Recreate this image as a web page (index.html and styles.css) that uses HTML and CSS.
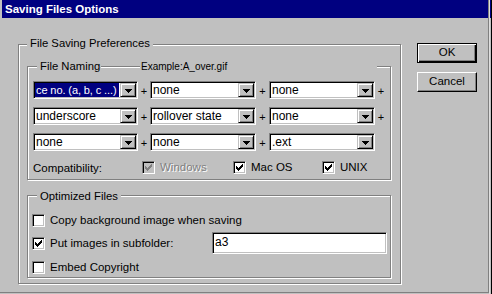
FILE: index.html
```html
<!DOCTYPE html>
<html>
<head>
<meta charset="utf-8">
<link rel="stylesheet" href="styles.css">
</head>
<body>
<div class="screen">
  <div class="dialog">
    <div class="titlebar">Saving Files Options</div>
    <div class="content">
      <div class="group group-outer">
        <div class="group-label outer-label">File Saving Preferences</div>

        <div class="group group-naming">
          <div class="naming-head">
            <span class="group-label naming-label">File Naming</span>
            <span class="example">Example:A_over.gif</span>
          </div>

          <div class="combo-row">
            <div class="combo w105"><span class="combo-text selected">ce no. (a, b, c ...)</span><span class="combo-btn"><svg width="7" height="4" viewBox="0 0 7 4"><path d="M0 0h7v1H0zM1 1h5v1H1zM2 2h3v1H2zM3 3h1v1H3z" fill="#000"/></svg></span></div>
            <span class="plus p12">+</span>
            <div class="combo w106"><span class="combo-text">none</span><span class="combo-btn"><svg width="7" height="4" viewBox="0 0 7 4"><path d="M0 0h7v1H0zM1 1h5v1H1zM2 2h3v1H2zM3 3h1v1H3z" fill="#000"/></svg></span></div>
            <span class="plus p13">+</span>
            <div class="combo w106"><span class="combo-text">none</span><span class="combo-btn"><svg width="7" height="4" viewBox="0 0 7 4"><path d="M0 0h7v1H0zM1 1h5v1H1zM2 2h3v1H2zM3 3h1v1H3z" fill="#000"/></svg></span></div>
            <span class="plus p12">+</span>
          </div>

          <div class="combo-row">
            <div class="combo w105"><span class="combo-text">underscore</span><span class="combo-btn"><svg width="7" height="4" viewBox="0 0 7 4"><path d="M0 0h7v1H0zM1 1h5v1H1zM2 2h3v1H2zM3 3h1v1H3z" fill="#000"/></svg></span></div>
            <span class="plus p12">+</span>
            <div class="combo w106"><span class="combo-text">rollover state</span><span class="combo-btn"><svg width="7" height="4" viewBox="0 0 7 4"><path d="M0 0h7v1H0zM1 1h5v1H1zM2 2h3v1H2zM3 3h1v1H3z" fill="#000"/></svg></span></div>
            <span class="plus p13">+</span>
            <div class="combo w106"><span class="combo-text">none</span><span class="combo-btn"><svg width="7" height="4" viewBox="0 0 7 4"><path d="M0 0h7v1H0zM1 1h5v1H1zM2 2h3v1H2zM3 3h1v1H3z" fill="#000"/></svg></span></div>
            <span class="plus p12">+</span>
          </div>

          <div class="combo-row">
            <div class="combo w105"><span class="combo-text">none</span><span class="combo-btn"><svg width="7" height="4" viewBox="0 0 7 4"><path d="M0 0h7v1H0zM1 1h5v1H1zM2 2h3v1H2zM3 3h1v1H3z" fill="#000"/></svg></span></div>
            <span class="plus p12">+</span>
            <div class="combo w106"><span class="combo-text">none</span><span class="combo-btn"><svg width="7" height="4" viewBox="0 0 7 4"><path d="M0 0h7v1H0zM1 1h5v1H1zM2 2h3v1H2zM3 3h1v1H3z" fill="#000"/></svg></span></div>
            <span class="plus p13">+</span>
            <div class="combo w106"><span class="combo-text">.ext</span><span class="combo-btn"><svg width="7" height="4" viewBox="0 0 7 4"><path d="M0 0h7v1H0zM1 1h5v1H1zM2 2h3v1H2zM3 3h1v1H3z" fill="#000"/></svg></span></div>
          </div>

          <div class="compat-row">
            <span class="compat-label">Compatibility:</span>
            <span class="check-item item-win disabled">
              <span class="checkbox"><svg width="13" height="13" viewBox="0 0 13 13"><path d="M3 5h1v3H3zM4 6h1v3H4zM5 7h1v3H5zM6 6h1v3H6zM7 5h1v3H7zM8 4h1v3H8zM9 3h1v3H9z" fill="#808080"/></svg></span>
              <span class="check-text">Windows</span>
            </span>
            <span class="check-item item-mac">
              <span class="checkbox"><svg width="13" height="13" viewBox="0 0 13 13"><path d="M3 5h1v3H3zM4 6h1v3H4zM5 7h1v3H5zM6 6h1v3H6zM7 5h1v3H7zM8 4h1v3H8zM9 3h1v3H9z" fill="#000"/></svg></span>
              <span class="check-text">Mac OS</span>
            </span>
            <span class="check-item">
              <span class="checkbox"><svg width="13" height="13" viewBox="0 0 13 13"><path d="M3 5h1v3H3zM4 6h1v3H4zM5 7h1v3H5zM6 6h1v3H6zM7 5h1v3H7zM8 4h1v3H8zM9 3h1v3H9z" fill="#000"/></svg></span>
              <span class="check-text">UNIX</span>
            </span>
          </div>
        </div>

        <div class="group group-opt">
          <div class="group-label opt-label">Optimized Files</div>
          <div class="opt-row opt-row1">
            <span class="check-item">
              <span class="checkbox"></span>
              <span class="check-text">Copy background image when saving</span>
            </span>
          </div>
          <div class="opt-row opt-row2">
            <span class="check-item item-sub">
              <span class="checkbox"><svg width="13" height="13" viewBox="0 0 13 13"><path d="M3 5h1v3H3zM4 6h1v3H4zM5 7h1v3H5zM6 6h1v3H6zM7 5h1v3H7zM8 4h1v3H8zM9 3h1v3H9z" fill="#000"/></svg></span>
              <span class="check-text">Put images in subfolder:</span>
            </span>
            <div class="textfield">a3</div>
          </div>
          <div class="opt-row opt-row3">
            <span class="check-item">
              <span class="checkbox"></span>
              <span class="check-text">Embed Copyright</span>
            </span>
          </div>
        </div>
      </div>

      <div class="buttons">
        <div class="btn btn-default">OK</div>
        <div class="btn">Cancel</div>
      </div>
    </div>
  </div>
  <div class="behind"><div class="behind-title"></div></div>
</div>
</body>
</html>
```
FILE: styles.css
```css
* { box-sizing: border-box; }
html, body { margin: 0; padding: 0; }
body {
  background: #c0c0c0;
  font-family: "Liberation Sans", Arial, sans-serif;
  font-size: 11px;
  color: #000;
  width: 492px;
  height: 294px;
  overflow: hidden;
}
.screen { display: flex; height: 294px; }

.dialog {
  width: 489px;
  height: 293px;
  background: #c0c0c0;
  border-right: 1px solid #808080;
  border-bottom: 1px solid #808080;
  padding-left: 2px;
  display: flex;
  flex-direction: column;
}
.titlebar {
  height: 18px;
  background: #000080;
  color: #fff;
  font-weight: bold;
  font-size: 11.5px;
  line-height: 18px;
  padding-left: 3px;
  white-space: nowrap;
}
.content {
  display: flex;
  align-items: flex-start;
  padding-left: 16px;
}

.group {
  border: 1px solid #808080;
  box-shadow: 1px 1px 0 #fff, inset 1px 1px 0 #fff;
  display: flex;
  flex-direction: column;
}
.group-label {
  align-self: flex-start;
  background: #c0c0c0;
  padding: 0 3px;
  line-height: 13px;
  height: 13px;
  white-space: nowrap;
}
.group-outer {
  margin-top: 26px;
  width: 383px;
  padding: 0 9px 5px 8px;
}
.outer-label { margin-top: -8px; font-size: 11.3px; }

.group-naming {
  margin-top: 16px;
  padding: 0 0 5px 5px;
}
.naming-head {
  display: flex;
  margin-top: -7px;
  height: 13px;
}
.naming-label { margin-left: 4px; width: 64px; font-size: 11.3px; }
.example {
  margin-left: 39px;
  width: 237px;
  padding-left: 1px;
  background: #c0c0c0;
  font-size: 10px;
  line-height: 13px;
  white-space: nowrap;
}

.combo-row {
  display: flex;
  align-items: center;
  height: 18px;
  margin-top: 8px;
}
.combo {
  display: flex;
  height: 18px;
  padding: 1px;
  background: #fff;
  border: 1px solid;
  border-color: #808080 #fff #fff #808080;
  box-shadow: inset 1px 1px 0 #000, inset -1px -1px 0 #c0c0c0;
}
.w105 { width: 105px; }
.w106 { width: 106px; }
.combo-text {
  flex: 1;
  min-width: 0;
  overflow: hidden;
  white-space: nowrap;
  font-size: 12px;
  line-height: 14px;
  padding-left: 1px;
}
.combo-text.selected {
  background: #000080;
  color: #fff;
  margin-right: 1px;
  font-size: 11px;
  letter-spacing: -0.1px;
}
.combo-btn {
  width: 16px;
  height: 14px;
  flex: none;
  background: #c0c0c0;
  border: 1px solid;
  border-color: #c0c0c0 #000 #000 #c0c0c0;
  box-shadow: inset 1px 1px 0 #fff, inset -1px -1px 0 #808080;
  display: flex;
  align-items: center;
  justify-content: center;
}
.combo-btn svg { display: block; margin-top: 1px; }
.plus {
  text-align: center;
  font-size: 11px;
  line-height: 13px;
  padding-top: 2px;
}
.p12 { width: 12px; }
.p13 { width: 13px; }

.compat-row {
  display: flex;
  align-items: center;
  height: 13px;
  margin-top: 10px;
  font-size: 11.5px;
}
.compat-label { width: 109px; white-space: nowrap; }
.check-item {
  display: flex;
  align-items: center;
  gap: 5px;
  white-space: nowrap;
}
.item-win { width: 91px; }
.item-mac { width: 89px; }
.checkbox {
  width: 13px;
  height: 13px;
  flex: none;
  background: #fff;
  border: 1px solid;
  border-color: #808080 #fff #fff #808080;
  box-shadow: inset 1px 1px 0 #000, inset -1px -1px 0 #c0c0c0;
  position: relative;
}
.checkbox svg { position: absolute; left: -1px; top: -1px; display: block; }
.check-text { line-height: 13px; }
.disabled .checkbox { background: #c0c0c0; }
.disabled .check-text { color: #808080; text-shadow: 1px 1px 0 #fff; }

.group-opt {
  margin-top: 15px;
  padding: 0 0 3px 4px;
  font-size: 11.5px;
}
.opt-label { margin-top: -6px; margin-left: 5px; font-size: 11.3px; }
.opt-row { display: flex; align-items: center; }
.opt-row1 { height: 13px; margin-top: 11px; }
.opt-row2 { height: 22px; margin-top: 5px; }
.opt-row3 { height: 13px; margin-top: 7px; }
.item-sub { width: 180px; }
.textfield {
  width: 175px;
  height: 22px;
  background: #fff;
  border: 1px solid;
  border-color: #808080 #fff #fff #808080;
  box-shadow: inset 1px 1px 0 #000, inset -1px -1px 0 #c0c0c0;
  font-size: 12px;
  line-height: 18px;
  padding-left: 2px;
}

.buttons {
  margin-left: 16px;
  margin-top: 25px;
  display: flex;
  flex-direction: column;
  gap: 9px;
}
.btn {
  width: 60px;
  height: 20px;
  background: #c0c0c0;
  border: 1px solid;
  border-color: #fff #000 #000 #fff;
  box-shadow: inset -1px -1px 0 #808080;
  text-align: center;
  font-size: 11.5px;
  line-height: 17px;
}
.btn-default {
  border-color: #000;
  box-shadow: inset 1px 1px 0 #fff, inset -1px -1px 0 #000, inset -2px -2px 0 #808080;
}

.behind {
  width: 3px;
  height: 294px;
  background: #c0c0c0;
  border-left: 1px solid #dfdfdf;
  border-right: 1px solid #000;
}
.behind-title { height: 18px; background: #000080; }
```
